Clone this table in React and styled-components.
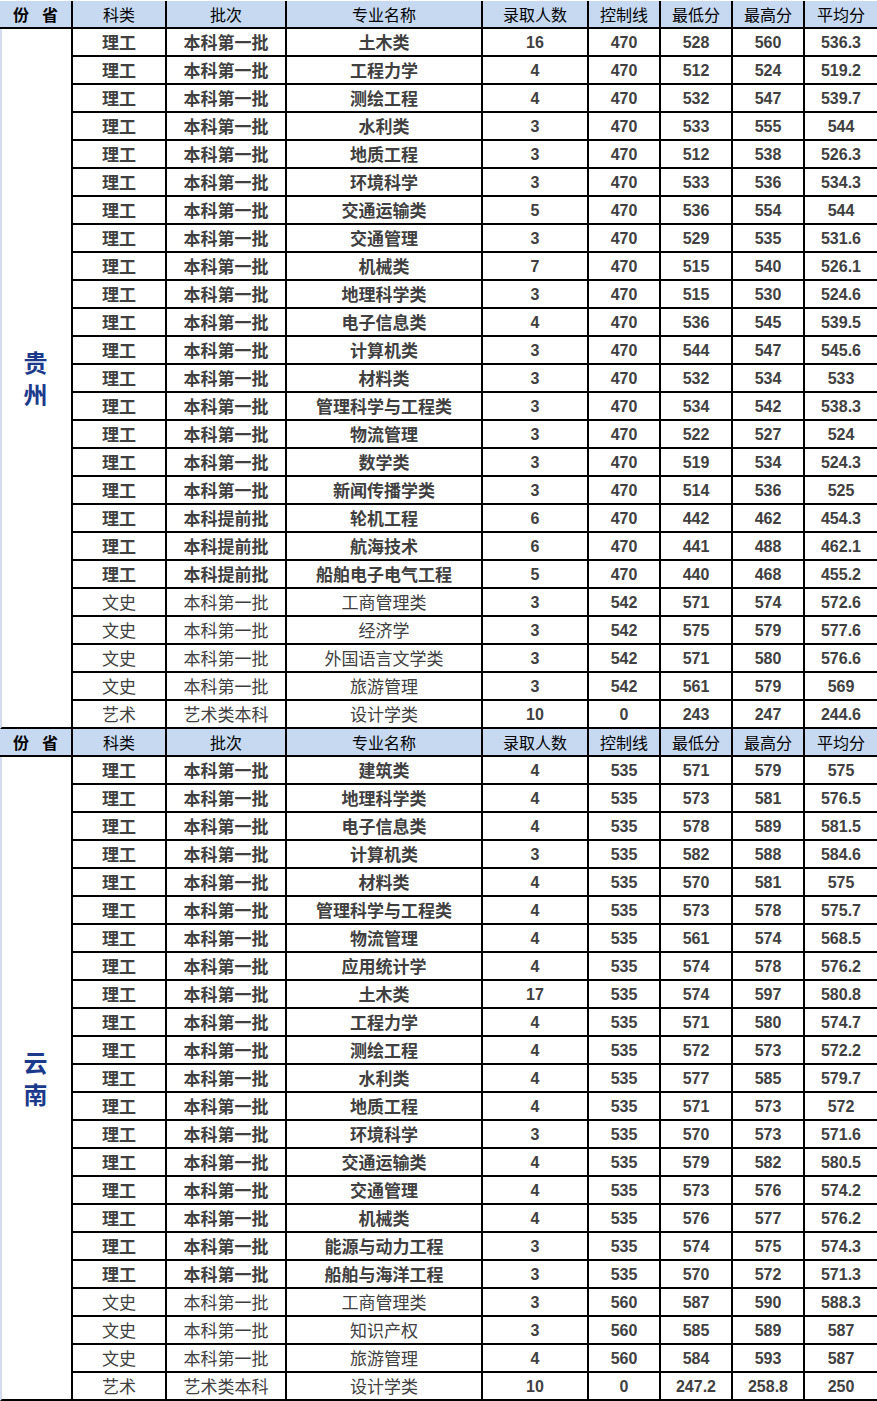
import React from "react";
import styled, { createGlobalStyle } from "styled-components";

const Global = createGlobalStyle`
  html, body { margin: 0; padding: 0; background: #ffffff; }
  body { font-family: "Liberation Sans", "Noto Sans CJK SC", sans-serif; }
`;

const COLS = "73px 94px 120px 196px 106px 72px 72px 72px 72px";

const Page = styled.div`
  width: 877px;
  padding-top: 1px;
`;

const Section = styled.div`
  display: grid;
  grid-template-columns: ${COLS};
  grid-auto-rows: 28px;
`;

const Cell = styled.div`
  box-sizing: border-box;
  display: flex;
  align-items: center;
  justify-content: center;
  border-bottom: 2px solid #000;
  border-right: ${(p) => (p.$last ? "none" : "2px solid #000")};
  white-space: nowrap;
  overflow: hidden;
`;

const HeadCell = styled(Cell)`
  background: #c6d9f1;
  color: #000;
  font-family: "Noto Sans CJK SC", sans-serif;
  font-size: 16px;
  font-weight: ${(p) => (p.$strong ? 700 : 400)};
  gap: ${(p) => (p.$strong ? "13px" : "0")};
  padding-bottom: 1px;
`;

const TextCell = styled(Cell)`
  color: #404040;
  font-family: "Noto Sans CJK SC", sans-serif;
  font-size: 17px;
  font-weight: ${(p) => (p.$bold ? 700 : 400)};
  padding-bottom: 1px;
`;

const NumCell = styled(Cell)`
  color: #404040;
  font-family: "Liberation Sans", Arial, sans-serif;
  font-size: 16px;
  font-weight: 700;
  padding-top: 1px;
`;

const ProvinceCell = styled(Cell)`
  grid-column: 1;
  grid-row: ${(p) => `2 / span ${p.$span}`};
  border-left: 2px solid #d3dbec;
  flex-direction: column;
  color: #1c3a8c;
  font-family: "Noto Sans CJK SC", sans-serif;
  font-size: 24px;
  font-weight: 700;
  line-height: 32px;
  padding-right: 2px;
`;

const headers = ["份省", "科类", "批次", "专业名称", "录取人数", "控制线", "最低分", "最高分", "平均分"];

const guizhou = [
  ["理工", "本科第一批", "土木类", "16", "470", "528", "560", "536.3"],
  ["理工", "本科第一批", "工程力学", "4", "470", "512", "524", "519.2"],
  ["理工", "本科第一批", "测绘工程", "4", "470", "532", "547", "539.7"],
  ["理工", "本科第一批", "水利类", "3", "470", "533", "555", "544"],
  ["理工", "本科第一批", "地质工程", "3", "470", "512", "538", "526.3"],
  ["理工", "本科第一批", "环境科学", "3", "470", "533", "536", "534.3"],
  ["理工", "本科第一批", "交通运输类", "5", "470", "536", "554", "544"],
  ["理工", "本科第一批", "交通管理", "3", "470", "529", "535", "531.6"],
  ["理工", "本科第一批", "机械类", "7", "470", "515", "540", "526.1"],
  ["理工", "本科第一批", "地理科学类", "3", "470", "515", "530", "524.6"],
  ["理工", "本科第一批", "电子信息类", "4", "470", "536", "545", "539.5"],
  ["理工", "本科第一批", "计算机类", "3", "470", "544", "547", "545.6"],
  ["理工", "本科第一批", "材料类", "3", "470", "532", "534", "533"],
  ["理工", "本科第一批", "管理科学与工程类", "3", "470", "534", "542", "538.3"],
  ["理工", "本科第一批", "物流管理", "3", "470", "522", "527", "524"],
  ["理工", "本科第一批", "数学类", "3", "470", "519", "534", "524.3"],
  ["理工", "本科第一批", "新闻传播学类", "3", "470", "514", "536", "525"],
  ["理工", "本科提前批", "轮机工程", "6", "470", "442", "462", "454.3"],
  ["理工", "本科提前批", "航海技术", "6", "470", "441", "488", "462.1"],
  ["理工", "本科提前批", "船舶电子电气工程", "5", "470", "440", "468", "455.2"],
  ["文史", "本科第一批", "工商管理类", "3", "542", "571", "574", "572.6"],
  ["文史", "本科第一批", "经济学", "3", "542", "575", "579", "577.6"],
  ["文史", "本科第一批", "外国语言文学类", "3", "542", "571", "580", "576.6"],
  ["文史", "本科第一批", "旅游管理", "3", "542", "561", "579", "569"],
  ["艺术", "艺术类本科", "设计学类", "10", "0", "243", "247", "244.6"],
];

const yunnan = [
  ["理工", "本科第一批", "建筑类", "4", "535", "571", "579", "575"],
  ["理工", "本科第一批", "地理科学类", "4", "535", "573", "581", "576.5"],
  ["理工", "本科第一批", "电子信息类", "4", "535", "578", "589", "581.5"],
  ["理工", "本科第一批", "计算机类", "3", "535", "582", "588", "584.6"],
  ["理工", "本科第一批", "材料类", "4", "535", "570", "581", "575"],
  ["理工", "本科第一批", "管理科学与工程类", "4", "535", "573", "578", "575.7"],
  ["理工", "本科第一批", "物流管理", "4", "535", "561", "574", "568.5"],
  ["理工", "本科第一批", "应用统计学", "4", "535", "574", "578", "576.2"],
  ["理工", "本科第一批", "土木类", "17", "535", "574", "597", "580.8"],
  ["理工", "本科第一批", "工程力学", "4", "535", "571", "580", "574.7"],
  ["理工", "本科第一批", "测绘工程", "4", "535", "572", "573", "572.2"],
  ["理工", "本科第一批", "水利类", "4", "535", "577", "585", "579.7"],
  ["理工", "本科第一批", "地质工程", "4", "535", "571", "573", "572"],
  ["理工", "本科第一批", "环境科学", "3", "535", "570", "573", "571.6"],
  ["理工", "本科第一批", "交通运输类", "4", "535", "579", "582", "580.5"],
  ["理工", "本科第一批", "交通管理", "4", "535", "573", "576", "574.2"],
  ["理工", "本科第一批", "机械类", "4", "535", "576", "577", "576.2"],
  ["理工", "本科第一批", "能源与动力工程", "3", "535", "574", "575", "574.3"],
  ["理工", "本科第一批", "船舶与海洋工程", "3", "535", "570", "572", "571.3"],
  ["文史", "本科第一批", "工商管理类", "3", "560", "587", "590", "588.3"],
  ["文史", "本科第一批", "知识产权", "3", "560", "585", "589", "587"],
  ["文史", "本科第一批", "旅游管理", "4", "560", "584", "593", "587"],
  ["艺术", "艺术类本科", "设计学类", "10", "0", "247.2", "258.8", "250"],
];

function Group({ province, rows }) {
  return (
    <Section>
      {headers.map((h, i) =>
        i === 0 ? (
          <HeadCell key={h} $strong>
            <span>份</span>
            <span>省</span>
          </HeadCell>
        ) : (
          <HeadCell key={h} $last={i === headers.length - 1}>
            {h}
          </HeadCell>
        )
      )}
      <ProvinceCell $span={rows.length}>
        {province.split("").map((c) => (
          <span key={c}>{c}</span>
        ))}
      </ProvinceCell>
      {rows.map((r, ri) => {
        const bold = r[0] === "理工";
        return (
          <React.Fragment key={ri}>
            <TextCell $bold={bold}>{r[0]}</TextCell>
            <TextCell $bold={bold}>{r[1]}</TextCell>
            <TextCell $bold={bold}>{r[2]}</TextCell>
            {r.slice(3).map((v, vi) => (
              <NumCell key={vi} $last={vi === 4}>
                {v}
              </NumCell>
            ))}
          </React.Fragment>
        );
      })}
    </Section>
  );
}

export default function App() {
  return (
    <>
      <Global />
      <Page>
        <Group province="贵州" rows={guizhou} />
        <Group province="云南" rows={yunnan} />
      </Page>
    </>
  );
}
